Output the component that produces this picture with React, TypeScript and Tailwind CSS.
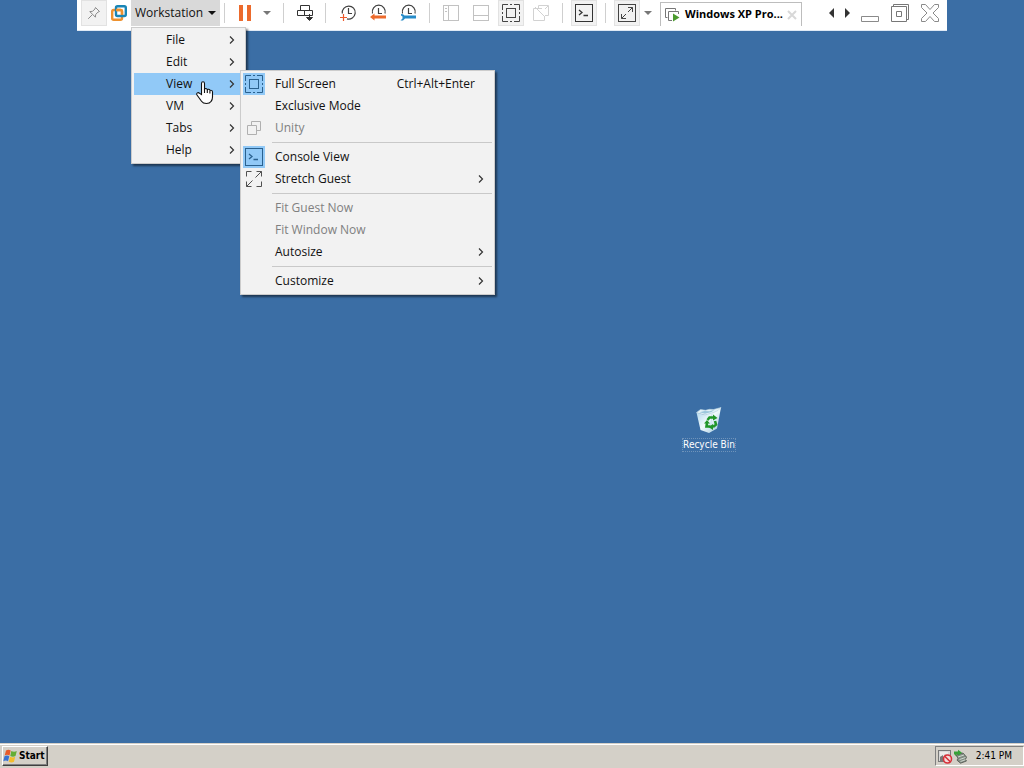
import React from "react";

const stroke = { fill: "none", strokeWidth: 1 } as const;

function Pin() {
  return (
    <svg width="14" height="14" viewBox="0 0 14 14" stroke="#8a8a8a" {...stroke}>
      <path d="M8.500 1.500l4 4-1.500.6-2.300 2.300-.3 2.800-5.600-5.600 2.800-.3 2.300-2.300zM5 9l-3.800 3.800" />
    </svg>
  );
}

function Logo() {
  return (
    <svg width="16" height="16" viewBox="0 0 16 16" fill="none" strokeWidth="2.400">
      <rect x="1.200" y="5" width="9.800" height="9.800" rx="1.500" stroke="#ee922f" />
      <rect x="5" y="1.200" width="9.800" height="9.800" rx="1.500" stroke="#1985b5" />
      <path d="M5 5h4.500q1.500 0 1.500 1.500v3" stroke="#ee922f" />
    </svg>
  );
}

function Caret({ color }: { color: string }) {
  return (
    <svg width="8" height="4" viewBox="0 0 8 4" fill={color}>
      <path d="M0 0h8L4 4z" />
    </svg>
  );
}

function Pause() {
  return (
    <svg width="12" height="16" viewBox="0 0 12 16" fill="#ec6a2c">
      <rect width="4" height="16" />
      <rect x="8" width="4" height="16" />
    </svg>
  );
}

function SendKeys() {
  return (
    <svg width="18" height="18" viewBox="0 0 18 18" stroke="#333" {...stroke}>
      <path d="M4.500 6.500v-5h9v5M1.500 6.500h7v5h-7zM8.500 6.500h8v5h-8zM13.500 10v6" />
      <path d="M10.500 13.500l3 3 3-3z" fill="#333" />
    </svg>
  );
}

function Clock({ kind }: { kind: "take" | "revert" | "manage" }) {
  return (
    <svg width="18" height="18" viewBox="0 0 18 18" {...stroke}>
      {kind === "take" ? (
        <path d="M3.300 9.500A6.500 6.500 0 1 1 8 14.800" stroke="#404040" strokeWidth="1.200" />
      ) : (
        <path d="M3.500 9.500a6.500 6.500 0 1 1 12.500 0" stroke="#404040" strokeWidth="1.200" />
      )}
      <path d="M9.500 4v5.500H13" stroke="#404040" strokeWidth="1.200" />
      {kind === "take" && <path d="M4.500 10v7M1 13.500h7" stroke="#ec5a2c" strokeWidth="1.200" />}
      {kind === "revert" && <path d="M1 13l4.500-3.500V11.500H17v3H5.500v2z" fill="#ec6a2c" />}
      {kind === "manage" && (
        <path d="M2 10l2 .2 1.500 1.300H17v3H6l-2 2H1.500l2-2V12.500L2 11.500z" fill="#268bc8" />
      )}
    </svg>
  );
}

function Pane({ side }: { side: "left" | "bottom" }) {
  return (
    <svg width="16" height="16" viewBox="0 0 16 16" stroke="#c2c2c2" {...stroke}>
      <rect x=".5" y=".5" width="15" height="15" />
      {side === "left" ? <path d="M5.500 .5v15M2 3.500h2M2 6.500h2" /> : <path d="M.5 10.500h15" />}
    </svg>
  );
}

function FullScreen({ color }: { color: string }) {
  return (
    <svg width="18" height="18" viewBox="0 0 18 18" stroke={color} {...stroke}>
      <path d="M.5 6V.5H6M12 .5h5.500V6M17.500 12v5.500H12M6 17.500H.5V12M8 .5h2M8 17.500h2M.5 8v2M17.500 8v2" />
      <rect x="4.500" y="4.500" width="9" height="9" />
    </svg>
  );
}

function Unity() {
  return (
    <svg width="16" height="16" viewBox="0 0 16 16" stroke="#b0b0b0" {...stroke}>
      <path d="M5.500 5V1.500h9v9H11M1.500 5.500h9v9h-9z" />
    </svg>
  );
}

function UnityCrossed() {
  return (
    <svg width="16" height="16" viewBox="0 0 16 16" stroke="#d2d2d2" {...stroke}>
      <path d="M5.500 3V.5h10v10H12M9 3.500H.5v12h11V12M2 2l10 10M12 4l3-3" />
    </svg>
  );
}

function Console({ color }: { color: string }) {
  return (
    <svg width="18" height="18" viewBox="0 0 18 18" stroke={color} {...stroke}>
      <rect x=".5" y=".5" width="17" height="17" />
      <path d="M4 6l3 2.500L4 11M8.500 11.500H13" strokeWidth="1.300" />
    </svg>
  );
}

function Stretch() {
  return (
    <svg width="18" height="18" viewBox="0 0 18 18" stroke="#444" {...stroke}>
      <rect x=".5" y=".5" width="17" height="17" />
      <path d="M3.500 10v4.500H8M10 3.500h4.500V8M3.500 14.500l4.500-4.500M14.500 3.500L10 8" />
    </svg>
  );
}

function StretchOpen() {
  return (
    <svg width="18" height="18" viewBox="0 0 18 18" stroke="#505050" {...stroke}>
      <path d="M1.500 6.500v-5h5M16.500 11.500v5h-5M11.500 1.500h5v5M16.500 1.500l-6 6M1.500 11.500v5h5M1.500 16.500l6-6" />
    </svg>
  );
}

function MachineIcon() {
  return (
    <svg width="16" height="14" viewBox="0 0 16 14" stroke="#777" {...stroke}>
      <path d="M2.500 9.500h-2v-9h10v2M7 12.500H3.500v-9h10V6" />
      <path d="M8 5.500v8l6.500-4z" fill="#4b9b2e" stroke="none" />
    </svg>
  );
}

function Cross({ size }: { size: "small" | "large" }) {
  return size === "small" ? (
    <svg width="10" height="10" viewBox="0 0 10 10" stroke="#d8d8d8" fill="none" strokeWidth="2">
      <path d="M1 1l8 8M9 1L1 9" />
    </svg>
  ) : (
    <svg width="18" height="18" viewBox="0 0 18 18" stroke="#8a8a8a" {...stroke}>
      <path d="M.5.5h4L9 5.500 13.500.5h4v3L12 9l5.500 5.500v3h-4L9 12.500l-4.500 5h-4v-3L6 9 .5 3.500z" />
    </svg>
  );
}

function Chevron() {
  return (
    <svg width="6" height="8" viewBox="0 0 6 8" stroke="#333" fill="none" strokeWidth="1.200">
      <path d="M1 .5L4.500 4 1 7.500" />
    </svg>
  );
}

function Hand() {
  return (
    <svg width="18" height="24" viewBox="0 0 18 24" fill="#fff" stroke="#111" strokeWidth="1.100">
      <path d="M5.500 13.500V2.500q0-1.700 1.500-1.700T8.500 2.500v6q.2-1 1.400-1t1.400 1.500q.2-.8 1.300-.7 1.300.1 1.300 1.500.3-.6 1.200-.5 1.400.1 1.400 1.700v5q0 3-1.500 4.500-1.300 2-4.500 2-3.500 0-5-2.300L1 14q-.7-1.500.3-2.100 1.200-.7 2.300.5z" />
      <path d="M8.500 8v4M11.300 9v3M13.900 10v2.500" fill="none" />
    </svg>
  );
}

function RecycleBin() {
  return (
    <svg width="28" height="28" viewBox="0 0 28 28">
      <defs>
        <linearGradient id="bin" x1="0" y1="0" x2="1" y2="1">
          <stop offset="0" stopColor="#a3cfe9" />
          <stop offset=".5" stopColor="#f1fafc" />
          <stop offset="1" stopColor="#96c1dc" />
        </linearGradient>
      </defs>
      <path d="M1.500 6.500l8 2.500 9-3 7.500-4.500-4 21L14 27l-8.500-3z" fill="url(#bin)" />
      <path d="M1.500 6.500l4-3 5 .8 4-1 4 .2L26 1.500l-3 3-5 2.200-8 2.300z" fill="#e4f2f7" stroke="#b8d4e2" strokeWidth=".6" />
      <path d="M4.500 6.300l5-1.300 5 .3 5-1.600-3 2.300-6.500 1.800z" fill="#9dc7dc" />
      <path d="M17 8l-2 18" stroke="#c6e1ec" />
      <g fill="none" stroke="#219629" strokeWidth="2.600">
        <path d="M12.500 14l2-2.500h4M20 15l1 3.500-3 2.500M12 17l-.5 3.500h4" />
      </g>
      <path d="M18 8.500v6l4.500-2.500zM18 18v6l-4.500-3zM9 17.500h6l-3-3.500z" fill="#219629" />
    </svg>
  );
}

function Flag() {
  return (
    <svg width="15" height="14" viewBox="0 0 15 14">
      <path d="M3 1.500q2.500-1.500 4.700 0L6.500 6.500Q4 5 1.700 6.500z" fill="#e95b2b" />
      <path d="M8.300 2q2.700 1.500 5.500 0l-1.300 5q-2.500 1.500-5.200 0z" fill="#65ae35" />
      <path d="M1.500 7.200q2.500-1.500 4.800 0L5 12.300Q3 10.800.3 12.300z" fill="#3a72d2" />
      <path d="M7 7.800q2.600 1.500 5.200 0L11 12.800q-2.500 1.500-5.200 0z" fill="#f4bd2c" />
    </svg>
  );
}

function TrayDisabled() {
  return (
    <svg width="16" height="15" viewBox="0 0 16 15">
      <rect x="1.500" y="1.500" width="12" height="11" fill="#d8d8d8" stroke="#777" />
      <path d="M3 4h8M3 6h4" stroke="#fff" />
      <path d="M3 12V8l3-2v6" fill="#777" />
      <circle cx="10.500" cy="10" r="4" fill="#f3dada" stroke="#d83039" strokeWidth="1.600" />
      <path d="M7.700 7.200l5.600 5.600" stroke="#d83039" strokeWidth="1.600" />
    </svg>
  );
}

function TrayDevice() {
  return (
    <svg width="15" height="15" viewBox="0 0 15 15">
      <path d="M3 6l7-2 3.500 4-1 2.500 1 1.500-6 2.200-3.500-3 1-2z" fill="#828b82" stroke="#4e564e" strokeWidth=".8" />
      <path d="M5 8l6-2M6.500 10.500l6-2M7.500 12.500l5-1.800" stroke="#cfd8cf" />
      <path d="M1 2.500h4V.8l4 3-4 3V5H3.500v2.500L1 5z" fill="#36a236" />
    </svg>
  );
}

function Tool({
  label,
  active,
  className = "w-[30px]",
  children,
}: {
  label: string;
  active?: boolean;
  className?: string;
  children: React.ReactNode;
}) {
  return (
    <div className={`flex h-[26px] shrink-0 items-center justify-center ${className}`}>
      <button
        type="button"
        aria-label={label}
        className={
          active
            ? "flex size-[26px] items-center justify-center border border-[#e2e2e2] bg-[#f2f2f2]"
            : "flex items-center justify-center"
        }
      >
        {children}
      </button>
    </div>
  );
}

function Divider({ className }: { className: string }) {
  return (
    <div className={`flex h-[26px] shrink-0 items-center justify-center ${className}`}>
      <span className="h-5 w-px bg-[#cfcfcf]" />
    </div>
  );
}

function Toolbar() {
  return (
    <header className="flex h-[31px] items-start border-b border-[#dfe9f5] bg-white pr-0.5 pl-1">
      <Tool label="Pin" active className="w-[26px]"><Pin /></Tool>
      <Tool label="VMware Workstation" className="w-6"><Logo /></Tool>
      <button type="button" className="flex h-[26px] w-[89px] shrink-0 items-center justify-between bg-[#d9d9d9] pr-1 pl-1">
        Workstation
        <Caret color="#111" />
      </button>
      <Divider className="w-[9px]" />
      <Tool label="Suspend" className="w-8"><Pause /></Tool>
      <Tool label="Power options" className="w-3"><Caret color="#777" /></Tool>
      <Divider className="w-5" />
      <Tool label="Send Ctrl+Alt+Del" className="w-6"><SendKeys /></Tool>
      <Divider className="w-4" />
      <Tool label="Take snapshot"><Clock kind="take" /></Tool>
      <Tool label="Revert snapshot"><Clock kind="revert" /></Tool>
      <Tool label="Manage snapshots"><Clock kind="manage" /></Tool>
      <Divider className="w-[13px]" />
      <Tool label="Show library"><Pane side="left" /></Tool>
      <Tool label="Show thumbnails"><Pane side="bottom" /></Tool>
      <Tool label="Full screen" active><FullScreen color="#444" /></Tool>
      <Tool label="Unity"><UnityCrossed /></Tool>
      <Divider className="w-[13px]" />
      <Tool label="Console view" active><Console color="#333" /></Tool>
      <Divider className="w-[13px]" />
      <Tool label="Stretch guest" active><Stretch /></Tool>
      <Tool label="Stretch options" className="w-3"><Caret color="#777" /></Tool>
      <div className="mt-0.5 ml-1.5 flex h-6 w-[142px] shrink-0 items-center border border-b-0 border-[#bdbdbd] px-1">
        <MachineIcon />
        <span className="ml-1 flex-1 text-[11px] font-bold whitespace-nowrap text-black">Windows XP Pro...</span>
        <button type="button" aria-label="Close tab"><Cross size="small" /></button>
      </div>
      <div className="ml-auto flex">
        <Tool label="Previous tab" className="w-4">
          <svg width="5" height="10" viewBox="0 0 5 10" fill="#333"><path d="M5 0v10L0 5z" /></svg>
        </Tool>
        <Tool label="Next tab" className="w-4">
          <svg width="5" height="10" viewBox="0 0 5 10" fill="#333"><path d="M0 0v10l5-5z" /></svg>
        </Tool>
        <Tool label="Minimize">
          <svg width="18" height="18" viewBox="0 0 18 18" stroke="#8a8a8a" {...stroke}><path d="M.5 12.500h17v5H.5z" /></svg>
        </Tool>
        <Tool label="Restore">
          <svg width="18" height="18" viewBox="0 0 18 18" stroke="#777" {...stroke}>
            <path d="M.5 2.500h15v15H.5zM2.500 2.500v-2h15v15h-2M5.500 7.500h5v5h-5z" />
          </svg>
        </Tool>
        <Tool label="Close"><Cross size="large" /></Tool>
      </div>
    </header>
  );
}

const rootItems = ["File", "Edit", "View", "VM", "Tabs", "Help"];

function RootMenu() {
  return (
    <div role="menu" className="absolute top-[27px] left-[54px] w-[115px] border border-[#cccccc] bg-[#f2f2f2] px-0.5 pt-px pb-0.5 shadow-[2px_2px_2px_rgba(0,0,0,0.5)]">
      {rootItems.map((item) => (
        <button
          key={item}
          type="button"
          role="menuitem"
          className={`flex h-[22px] w-full items-center justify-between pr-2 pl-8 ${item === "View" ? "bg-[#91c9f7]" : ""}`}
        >
          {item}
          <Chevron />
        </button>
      ))}
    </div>
  );
}

type Entry = {
  label: string;
  icon?: React.ReactNode;
  checked?: boolean;
  disabled?: boolean;
  shortcut?: string;
  submenu?: boolean;
};

const viewGroups: Entry[][] = [
  [
    { label: "Full Screen", icon: <FullScreen color="#2a618f" />, checked: true, shortcut: "Ctrl+Alt+Enter" },
    { label: "Exclusive Mode" },
    { label: "Unity", icon: <Unity />, disabled: true },
  ],
  [
    { label: "Console View", icon: <Console color="#2a618f" />, checked: true },
    { label: "Stretch Guest", icon: <StretchOpen />, submenu: true },
  ],
  [
    { label: "Fit Guest Now", disabled: true },
    { label: "Fit Window Now", disabled: true },
    { label: "Autosize", submenu: true },
  ],
  [{ label: "Customize", submenu: true }],
];

function ViewMenu() {
  return (
    <div role="menu" className="absolute top-[70px] left-[163px] w-[255px] border border-[#cccccc] bg-[#f2f2f2] p-0.5 shadow-[2px_2px_2px_rgba(0,0,0,0.5)]">
      {viewGroups.map((group, index) => (
        <React.Fragment key={group[0].label}>
          {index > 0 && (
            <div role="separator" className="flex h-[7px] items-center pl-[29px]">
              <span className="h-px w-full bg-[#c9c9c9]" />
            </div>
          )}
          {group.map((entry) => (
            <button
              key={entry.label}
              type="button"
              role="menuitem"
              disabled={entry.disabled}
              className={`flex h-[22px] w-full items-center ${entry.disabled ? "text-[#808080]" : ""}`}
            >
              <span className={`flex h-[22px] w-[22px] items-center justify-center ${entry.checked ? "bg-[#91c9f7]" : ""}`}>
                {entry.icon}
              </span>
              <span className="ml-[10px] flex-1 text-left">{entry.label}</span>
              {entry.shortcut && <span className="mr-[17px]">{entry.shortcut}</span>}
              {entry.submenu && <span className="mr-2"><Chevron /></span>}
            </button>
          ))}
        </React.Fragment>
      ))}
    </div>
  );
}

export default function App() {
  return (
    <div className="flex min-h-screen flex-col bg-[#3b6ea5] font-['Open_Sans','Noto_Sans',sans-serif] text-xs text-[#111]">
      <div className="relative mx-auto w-full max-w-[870px]">
        <Toolbar />
        <RootMenu />
        <ViewMenu />
        <div className="pointer-events-none absolute top-[81px] left-[119px]"><Hand /></div>
      </div>
      <main className="relative flex-1">
        <button type="button" className="absolute top-[375px] left-[682px] flex w-[54px] flex-col items-center gap-1 font-['DejaVu_Sans_Condensed','DejaVu_Sans',sans-serif] text-[10px] leading-3 whitespace-nowrap text-white">
          <RecycleBin />
          <span className="border border-dotted border-[#6f93ba]">Recycle Bin</span>
        </button>
      </main>
      <footer className="flex h-[25px] items-center justify-between border-t border-[#d4d0c8] bg-[#d4d0c8] pl-0.5 font-['DejaVu_Sans_Condensed','DejaVu_Sans',sans-serif] text-[10px] text-black shadow-[inset_0_1px_0_#ffffff]">
        <button type="button" className="flex h-5 items-center gap-px border border-t-white border-r-[#404040] border-b-[#404040] border-l-white pr-0.5 font-bold shadow-[inset_-1px_-1px_0_#808080]">
          <Flag />
          Start
        </button>
        <div className="flex h-5 items-center border border-t-[#808080] border-r-white border-b-white border-l-[#808080] pr-[11px] pl-px">
          <TrayDisabled />
          <TrayDevice />
          <time className="ml-2">2:41 PM</time>
        </div>
      </footer>
    </div>
  );
}
